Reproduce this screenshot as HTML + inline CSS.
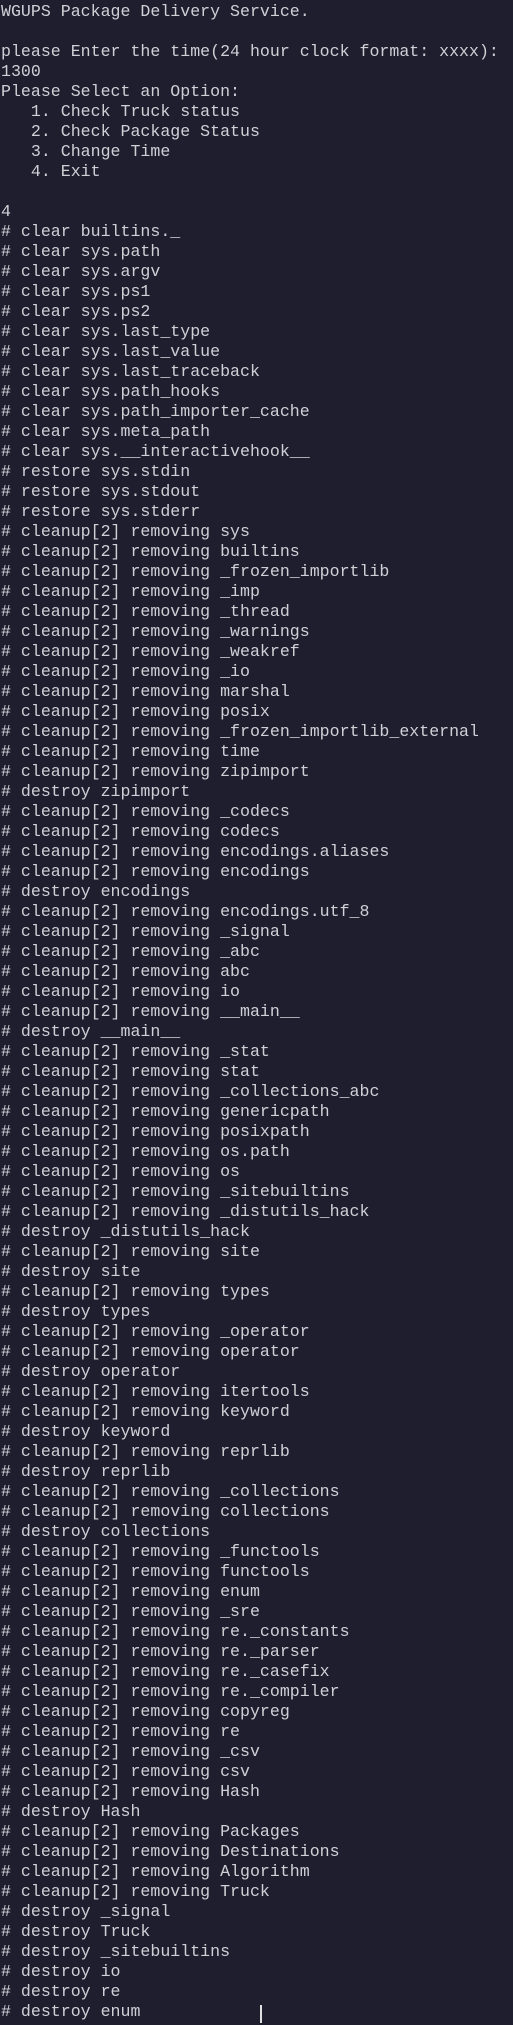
<!DOCTYPE html>
<html><head><meta charset="utf-8"><style>
html,body{margin:0;padding:0;background:#1e1e2e;width:513px;height:2025px;overflow:hidden}
pre{margin:0;padding:2px 0 0 1px;font-family:"Liberation Mono",monospace;font-size:16.6px;line-height:20px;color:#cfd0d6;white-space:pre}
.cur{position:absolute;left:260px;top:2005px;width:2px;height:18px;background:#e0e0e0}
</style></head><body><pre>WGUPS Package Delivery Service.

please Enter the time(24 hour clock format: xxxx):
1300
Please Select an Option:
   1. Check Truck status
   2. Check Package Status
   3. Change Time
   4. Exit

4
# clear builtins._
# clear sys.path
# clear sys.argv
# clear sys.ps1
# clear sys.ps2
# clear sys.last_type
# clear sys.last_value
# clear sys.last_traceback
# clear sys.path_hooks
# clear sys.path_importer_cache
# clear sys.meta_path
# clear sys.__interactivehook__
# restore sys.stdin
# restore sys.stdout
# restore sys.stderr
# cleanup[2] removing sys
# cleanup[2] removing builtins
# cleanup[2] removing _frozen_importlib
# cleanup[2] removing _imp
# cleanup[2] removing _thread
# cleanup[2] removing _warnings
# cleanup[2] removing _weakref
# cleanup[2] removing _io
# cleanup[2] removing marshal
# cleanup[2] removing posix
# cleanup[2] removing _frozen_importlib_external
# cleanup[2] removing time
# cleanup[2] removing zipimport
# destroy zipimport
# cleanup[2] removing _codecs
# cleanup[2] removing codecs
# cleanup[2] removing encodings.aliases
# cleanup[2] removing encodings
# destroy encodings
# cleanup[2] removing encodings.utf_8
# cleanup[2] removing _signal
# cleanup[2] removing _abc
# cleanup[2] removing abc
# cleanup[2] removing io
# cleanup[2] removing __main__
# destroy __main__
# cleanup[2] removing _stat
# cleanup[2] removing stat
# cleanup[2] removing _collections_abc
# cleanup[2] removing genericpath
# cleanup[2] removing posixpath
# cleanup[2] removing os.path
# cleanup[2] removing os
# cleanup[2] removing _sitebuiltins
# cleanup[2] removing _distutils_hack
# destroy _distutils_hack
# cleanup[2] removing site
# destroy site
# cleanup[2] removing types
# destroy types
# cleanup[2] removing _operator
# cleanup[2] removing operator
# destroy operator
# cleanup[2] removing itertools
# cleanup[2] removing keyword
# destroy keyword
# cleanup[2] removing reprlib
# destroy reprlib
# cleanup[2] removing _collections
# cleanup[2] removing collections
# destroy collections
# cleanup[2] removing _functools
# cleanup[2] removing functools
# cleanup[2] removing enum
# cleanup[2] removing _sre
# cleanup[2] removing re._constants
# cleanup[2] removing re._parser
# cleanup[2] removing re._casefix
# cleanup[2] removing re._compiler
# cleanup[2] removing copyreg
# cleanup[2] removing re
# cleanup[2] removing _csv
# cleanup[2] removing csv
# cleanup[2] removing Hash
# destroy Hash
# cleanup[2] removing Packages
# cleanup[2] removing Destinations
# cleanup[2] removing Algorithm
# cleanup[2] removing Truck
# destroy _signal
# destroy Truck
# destroy _sitebuiltins
# destroy io
# destroy re
# destroy enum</pre><div class="cur"></div></body></html>
